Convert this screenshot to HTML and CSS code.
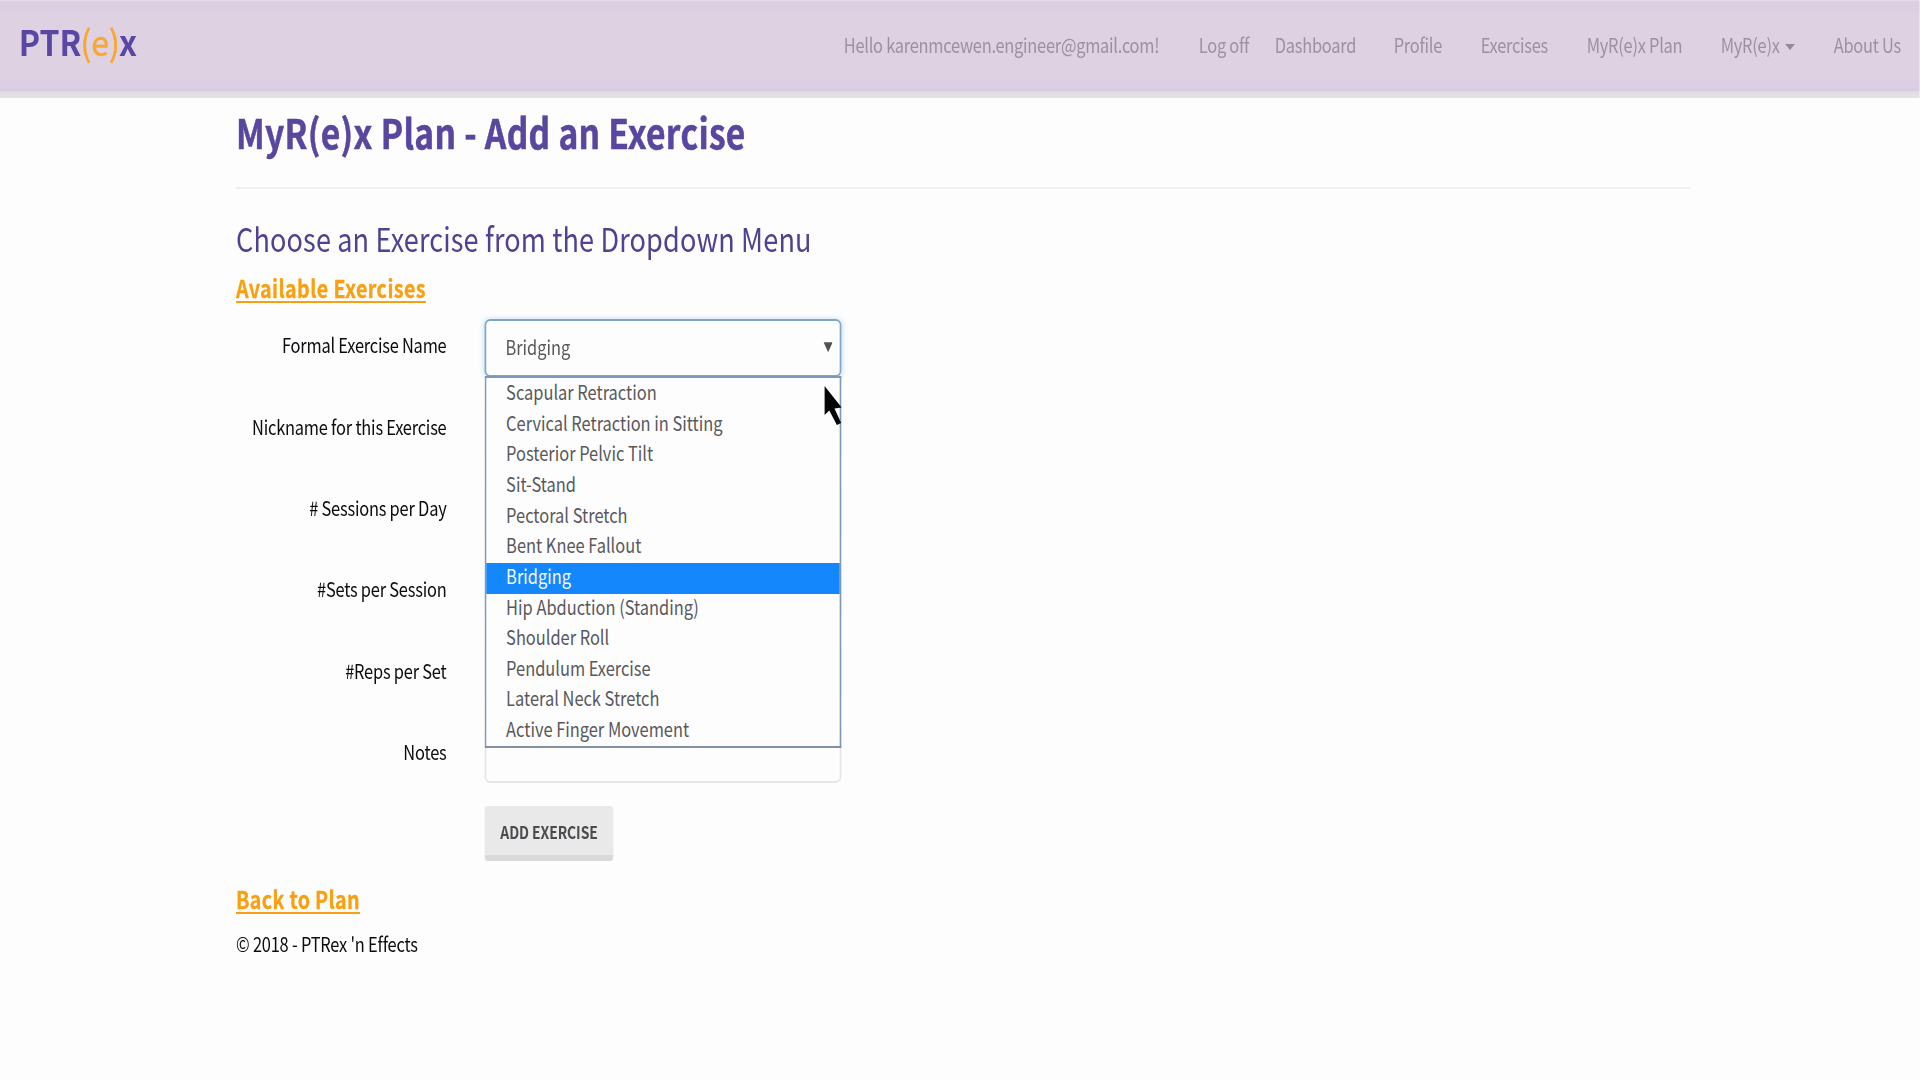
FILE: index.html
```html
<!DOCTYPE html>
<html lang="en">
<head>
<meta charset="utf-8">
<title>MyR(e)x Plan - Add an Exercise</title>
<link rel="stylesheet" href="styles.css">
</head>
<body>
<div class="page">
  <header class="navbar">
    <a class="logo"><b>PTR</b><span class="logo-e">(e)</span><b>x</b></a>
    <nav class="nav">
      <span class="nav-hello">Hello karenmcewen.engineer@gmail.com!</span>
      <span class="nav-logoff">Log off</span>
      <span class="nav-dashboard">Dashboard</span>
      <span class="nav-profile">Profile</span>
      <span class="nav-exercises">Exercises</span>
      <span class="nav-plan">MyR(e)x Plan</span>
      <span class="nav-myrex">MyR(e)x<i class="caret"></i></span>
      <span class="nav-about">About Us</span>
    </nav>
  </header>
  <main class="container">
    <h1>MyR(e)x Plan - Add an Exercise</h1>
    <hr>
    <h2>Choose an Exercise from the Dropdown Menu</h2>
    <a class="link">Available Exercises</a>
    <form class="form">
      <div class="row">
        <label>Formal Exercise Name</label>
        <div class="field select">
          <span>Bridging</span><i class="arrow"></i>
          <ul class="options">
            <li>Scapular Retraction</li>
            <li>Cervical Retraction in Sitting</li>
            <li>Posterior Pelvic Tilt</li>
            <li>Sit-Stand</li>
            <li>Pectoral Stretch</li>
            <li>Bent Knee Fallout</li>
            <li class="selected">Bridging</li>
            <li>Hip Abduction (Standing)</li>
            <li>Shoulder Roll</li>
            <li>Pendulum Exercise</li>
            <li>Lateral Neck Stretch</li>
            <li>Active Finger Movement</li>
          </ul>
          <svg class="cursor" viewBox="0 0 19 40" preserveAspectRatio="none"><path d="M.5 0V29L5.5 24.5L13.5 39L18 37L11 22.5L18.5 21.5Z" fill="#050507"/></svg>
        </div>
      </div>
      <div class="row"><label>Nickname for this Exercise</label><div class="field"></div></div>
      <div class="row"><label># Sessions per Day</label><div class="field"></div></div>
      <div class="row"><label>#Sets per Session</label><div class="field"></div></div>
      <div class="row"><label>#Reps per Set</label><div class="field"></div></div>
      <div class="row"><label>Notes</label><div class="field"></div></div>
      <button class="button" type="button">ADD EXERCISE</button>
    </form>
    <a class="link back">Back to Plan</a>
    <footer>© 2018 - PTRex 'n Effects</footer>
  </main>
</div>
</body>
</html>
```
FILE: styles.css
```css
:root {
  --k: 0.82; /* horizontal condensing of the whole page */
}
* { box-sizing: border-box; }
html { overflow: hidden; background: #fdfdfd; }
body {
  margin: 0;
  width: 1920px;
  height: 1080px;
  overflow: hidden;
  background: #fdfdfd;
  color: #0c0c10;
  font-family: "Noto Sans CJK SC", "Noto Sans", sans-serif;
  font-size: 20px;
}
.page {
  width: calc(1920px / var(--k));
  height: 1080px;
  transform: scaleX(var(--k));
  transform-origin: 0 0;
}
.navbar {
  display: flex;
  justify-content: space-between;
  height: 98px;
  padding-left: calc(18.5px / var(--k));
  background: linear-gradient(#e6daeb 0, #dccfe1 2px, #dccfe1 9px, #ddd1e2 14px, #ddd1e2 78px, #dccee5 82px, #dccee5 88px, #d4c9dc 90px, #e2dbe3 92px, #e6e1e7 98px);
}
.logo {
  height: 60px;
  margin-top: 11px;
  font-size: 35px;
  line-height: 60px;
  color: #5a46a3;
  transform: scaleX(1.115);
  transform-origin: 0 0;
}
.logo-e { color: #fba62c; margin: 0 -1px 0 -1px; -webkit-text-stroke: 0.5px #fba62c; }
.nav {
  display: flex;
  height: 60px;
  margin-top: 15px;
  line-height: 60px;
  letter-spacing: -0.3px;
  color: #9c91a1;
  white-space: nowrap;
}
.nav-hello { width: calc(355px / var(--k)); }
.nav-logoff { width: calc(76px / var(--k)); }
.nav-dashboard { width: calc(119px / var(--k)); }
.nav-profile { width: calc(87px / var(--k)); }
.nav-exercises { width: calc(106px / var(--k)); }
.nav-plan { width: calc(134px / var(--k)); }
.nav-myrex { width: calc(113px / var(--k)); }
.nav-about { width: calc(86.3px / var(--k)); }
.caret {
  display: inline-block;
  margin-left: 7px;
  vertical-align: 3px;
  border: 6px solid transparent;
  border-top-color: #9389a0;
  border-bottom-width: 0;
}
.container {
  width: calc(1690px / var(--k));
  padding-left: calc(236px / var(--k));
}
h1 {
  margin: 0;
  height: 64px;
  font-size: 41px;
  line-height: 66px;
  letter-spacing: 0.35px;
  color: #58469f;
  -webkit-text-stroke: 0.5px #58469f;
}
hr {
  height: 2px;
  margin: 25px 0 28.6px;
  border: 0;
  background: #efefef;
}
h2 {
  margin: 0 0 15.6px;
  font-size: 33px;
  font-weight: 400;
  line-height: 40px;
  letter-spacing: 0.18px;
  color: #4e4291;
}
.link {
  display: block;
  width: max-content;
  height: 30px;
  font-size: 24px;
  font-weight: 700;
  line-height: 30px;
  letter-spacing: 0.5px;
  color: #f9a012;
  -webkit-text-stroke: 0.3px #f9a012;
  text-decoration: underline;
  text-decoration-thickness: 2px;
  text-underline-offset: 3px;
  text-decoration-skip-ink: none;
}
.form { margin-top: 16px; }
.row {
  display: flex;
  height: 58px;
  margin-bottom: 23.4px;
}
.row:nth-child(6) { height: 57px; margin-bottom: 22.4px; }
label {
  width: calc(210.5px / var(--k));
  margin-right: calc(38.3px / var(--k));
  line-height: 51.5px;
  letter-spacing: -0.26px;
  text-align: right;
}
.field {
  position: relative;
  width: calc(356.5px / var(--k));
  border: 2px solid #e6e6e8;
  border-radius: 7px / 6px;
  background: #fdfdfd;
}
.select {
  display: flex;
  justify-content: space-between;
  padding: 0 calc(7px / var(--k)) 0 calc(19px / var(--k));
  border-color: #7fa6c8;
  box-shadow: 0 0 6px rgba(110, 175, 225, 0.45);
  line-height: 52px;
  color: #58585c;
}
.arrow {
  width: 11px;
  height: 10px;
  margin-top: 21px;
  background: #505054;
  clip-path: polygon(0 0, 100% 0, 50% 100%);
}
.options {
  position: absolute;
  z-index: 2;
  top: 55px;
  left: -2px;
  right: -2px;
  height: 372px;
  margin: 0;
  padding: 1px 0 0;
  border: 2px solid #7c98bb;
  border-bottom-color: #8291a2;
  background: #fdfdfd;
  list-style: none;
}
.options li {
  height: 30.63px;
  padding-left: calc(19.7px / var(--k));
  line-height: 26px;
}
.options .selected { background: #1487fd; color: #f4f9ff; }
.cursor {
  position: absolute;
  z-index: 3;
  top: 65px;
  left: calc(337.5px / var(--k));
  width: calc(18px / var(--k));
  height: 40px;
}
.button {
  display: block;
  width: calc(128.5px / var(--k));
  height: 55px;
  margin: 0 0 0 calc(248.8px / var(--k));
  padding: 4px 0 0;
  border: 0;
  border-bottom: 6px solid #dadadb;
  border-radius: 4px;
  background: #e9e9ea;
  color: #4c4c50;
  font: 700 17px/40px "Noto Sans CJK SC", "Noto Sans", sans-serif;
  letter-spacing: -0.1px;
}
.back { margin-top: 23.5px; letter-spacing: 0.4px; }
footer {
  margin-top: 15px;
  line-height: 30px;
  letter-spacing: -0.25px;
}
```
